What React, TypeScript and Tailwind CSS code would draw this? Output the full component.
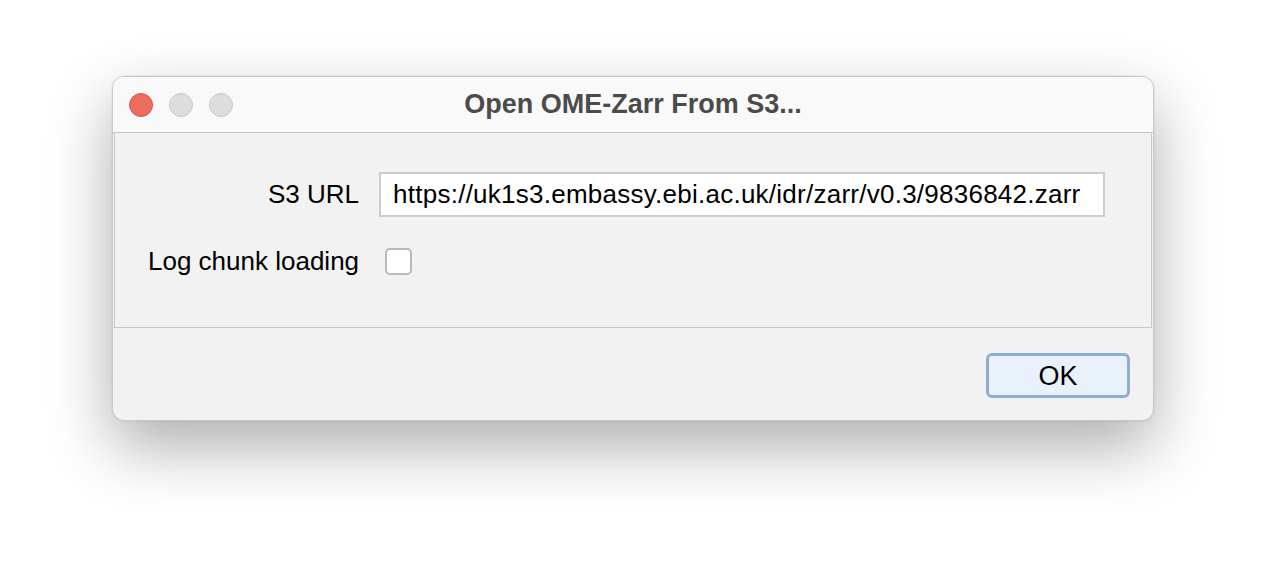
import { useState } from "react"

export default function App() {
  const [url, setUrl] = useState("https://uk1s3.embassy.ebi.ac.uk/idr/zarr/v0.3/9836842.zarr")
  const [logChunks, setLogChunks] = useState(false)

  return (
    <div
      className="min-h-[570px] bg-white flex justify-center pt-[76px]"
      style={{ fontFamily: '"Liberation Sans", Arial, sans-serif' }}
    >
      <div className="w-[1042px] h-[345px] rounded-[12px] bg-[#f2f2f2] border border-[#c9c9c9] shadow-[0_26px_64px_rgba(0,0,0,0.32),0_0_0_1px_rgba(0,0,0,0.04)] flex flex-col overflow-hidden">
        {/* title bar */}
        <div className="h-[56px] shrink-0 bg-[#f9f9f9] border-b border-[#c4c4c4] grid grid-cols-[1fr_auto_1fr] items-center px-[16px]">
          <div className="flex items-center gap-[16px]">
            <span className="w-[24px] h-[24px] rounded-full bg-[#ed6b5f] border border-[#d5584d]" />
            <span className="w-[24px] h-[24px] rounded-full bg-[#dddddd] border border-[#c9c9c9]" />
            <span className="w-[24px] h-[24px] rounded-full bg-[#dddddd] border border-[#c9c9c9]" />
          </div>
          <div className="text-[27px] font-bold text-[#4b4b4b]">Open OME-Zarr From S3...</div>
          <div />
        </div>

        {/* form panel */}
        <div className="mx-[1px] h-[195px] shrink-0 border-x border-b border-[#c8c8c8] bg-[#f2f2f2] pt-[39px] pl-[33px] pr-[46px]">
          <div className="grid grid-cols-[auto_1fr] gap-x-[20px] gap-y-[25px] items-center">
            <label className="text-[26px] text-black text-right">S3 URL</label>
            <input
              value={url}
              onChange={(e) => setUrl(e.target.value)}
              className="h-[45px] w-full bg-white border-2 border-[#cdcdcd] px-[12px] text-[26px] tracking-[0.25px] text-black outline-none"
            />
            <label className="text-[26px] text-black text-right">Log chunk loading</label>
            <div>
              <button
                type="button"
                onClick={() => setLogChunks(!logChunks)}
                className="ml-[6px] w-[27px] h-[27px] rounded-[5px] bg-white border-2 border-[#b9b9b9] flex items-center justify-center text-[18px] leading-none"
              >
                {logChunks ? "✓" : ""}
              </button>
            </div>
          </div>
        </div>

        {/* button bar */}
        <div className="flex-1 flex items-end justify-end pr-[23px] pb-[22px]">
          <button
            type="button"
            className="w-[144px] h-[45px] rounded-[6px] bg-[#e9f1fb] border-[3px] border-[#8eadd5] text-[27px] text-black"
          >
            OK
          </button>
        </div>
      </div>
    </div>
  )
}
